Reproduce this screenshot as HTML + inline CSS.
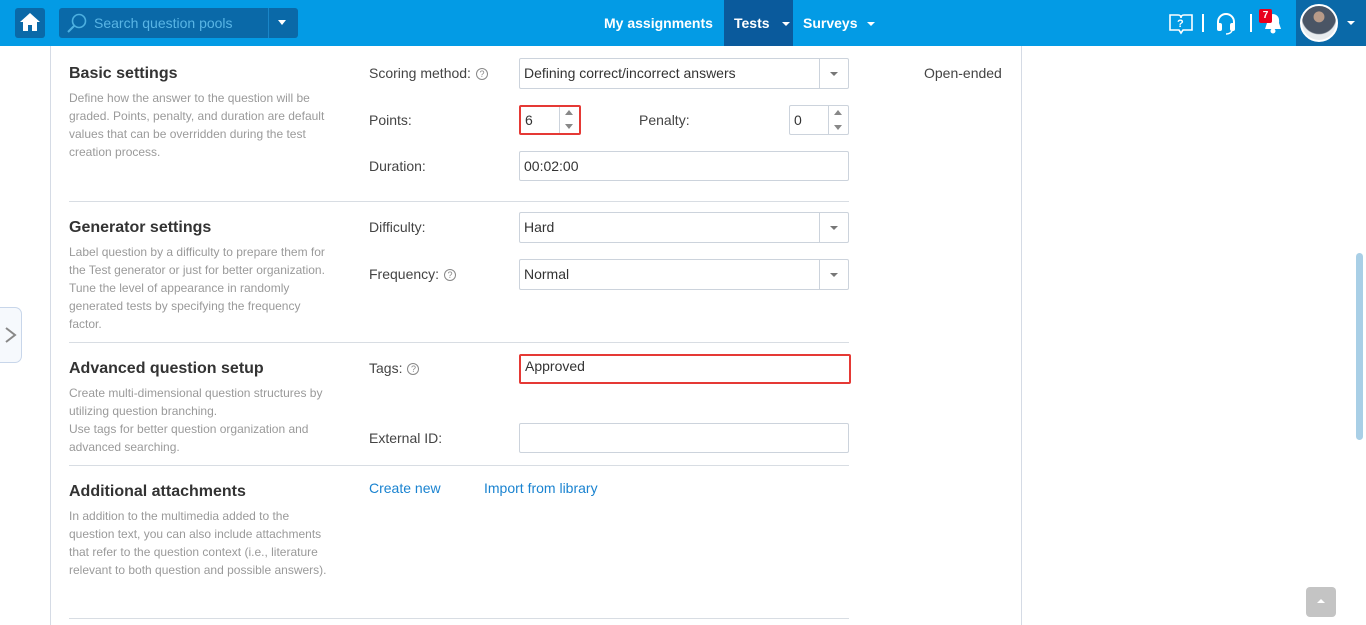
<!DOCTYPE html><html><head><meta charset="utf-8"><style>
*{box-sizing:border-box;margin:0;padding:0}
body{width:1366px;height:625px;overflow:hidden;background:#fff;font-family:"Liberation Sans",sans-serif;position:relative;color:#333}
.a{position:absolute}
.top{left:0;top:0;width:1366px;height:46px;background:#039be5}
.nav{color:#fff;font-size:14px;font-weight:bold;top:15px}
h2{position:absolute;font-size:16px;font-weight:bold;color:#333;left:69px}
.d{position:absolute;left:69px;font-size:12px;line-height:18px;color:#9a9a9a;white-space:nowrap}
.l{position:absolute;left:369px;font-size:14px;color:#444}
.in{position:absolute;border:1px solid #ccd3dc;border-radius:2px;font-size:14px;color:#333;padding:0 4px;background:#fff}
.sel::after{content:"";position:absolute;right:0;top:0;bottom:0;width:28px;border-left:1px solid #ccd3dc}
.car{position:absolute;right:10px;top:13px;border:4px solid transparent;border-top:4px solid #777;border-bottom:0;z-index:1}
.hr{position:absolute;left:69px;width:780px;height:1px;background:#d8dde3}
.q{display:inline-block;width:12px;height:12px;border:1px solid #888;border-radius:50%;font-size:9px;line-height:10px;text-align:center;color:#888;vertical-align:1px;margin-left:5px}
.sp{position:absolute;right:0;top:0;bottom:0;width:20px;border-left:1px solid #ccd3dc}
.sp i{position:absolute;left:5px;border:4px solid transparent}
</style></head><body>
<div class="a top"></div>
<div class="a" style="left:15px;top:8px;width:30px;height:30px;background:#0a69a8;border-radius:3px"></div>
<svg class="a" style="left:19px;top:12px" width="22" height="20"><path d="M11 1 L1 10 H4 V19 H9 V13 H13 V19 H18 V10 H21Z" fill="#fff"/></svg>
<div class="a" style="left:59px;top:8px;width:239px;height:30px;background:#0a69a8;border-radius:3px"></div>
<div class="a" style="left:268px;top:8px;width:1px;height:30px;background:#1a86c8"></div>
<svg class="a" style="left:66px;top:12px" width="22" height="22"><circle cx="13" cy="9" r="6.5" fill="none" stroke="#4db0e0" stroke-width="1.6"/><path d="M8 14 L2 20" stroke="#4db0e0" stroke-width="2"/></svg>
<div class="a" style="left:94px;top:15px;font-size:14px;color:#59b5e5">Search question pools</div>
<div class="a" style="left:278px;top:20px;border:4px solid transparent;border-top:5px solid #fff"></div>
<div class="a nav" style="left:604px">My assignments</div>
<div class="a" style="left:724px;top:0;width:69px;height:46px;background:#0a5a9c"></div>
<div class="a nav" style="left:734px">Tests</div>
<div class="a" style="left:782px;top:22px;border:4px solid transparent;border-top:4px solid #fff"></div>
<div class="a nav" style="left:803px">Surveys</div>
<div class="a" style="left:867px;top:22px;border:4px solid transparent;border-top:4px solid #fff"></div>
<svg class="a" style="left:1168px;top:11px" width="26" height="24"><path d="M2 4 H10 Q13 4 13 7 Q13 4 16 4 H24 V19 H15 L13 22 L11 19 H2Z" fill="none" stroke="#fff" stroke-width="1.6"/><text x="9" y="16" font-size="11" font-weight="bold" fill="#fff" font-family="Liberation Sans">?</text></svg>
<div class="a" style="left:1202px;top:14px;width:2px;height:18px;background:#fff"></div>
<svg class="a" style="left:1214px;top:11px" width="24" height="24"><path d="M4 14 V11 A8 8 0 0 1 20 11 V14" fill="none" stroke="#fff" stroke-width="2"/><rect x="3" y="12" width="5" height="8" rx="2" fill="#fff"/><rect x="16" y="12" width="5" height="8" rx="2" fill="#fff"/><path d="M18 20 Q16 23 12 23" fill="none" stroke="#fff" stroke-width="1.5"/></svg>
<div class="a" style="left:1250px;top:14px;width:2px;height:18px;background:#fff"></div>
<svg class="a" style="left:1263px;top:12px" width="20" height="22"><path d="M10 2 Q3 3 4 11 L2 17 H18 L16 11 Q17 3 10 2Z" fill="#fff"/><circle cx="10" cy="19" r="2.5" fill="#fff"/></svg>
<div class="a" style="left:1259px;top:9px;width:13px;height:14px;background:#e8001c;color:#fff;font-size:10px;font-weight:bold;text-align:center;line-height:14px;border-radius:2px">7</div>
<div class="a" style="left:1296px;top:0;width:70px;height:46px;background:#0a69a8"></div>
<div class="a" style="left:1300px;top:4px;width:38px;height:38px;border-radius:50%;background:radial-gradient(circle at 50% 32%,#b89a88 0 18%,#4a5565 20% 58%,#e8ecef 62%);border:2px solid #fff"></div>
<div class="a" style="left:1347px;top:21px;border:4px solid transparent;border-top:4px solid #fff"></div>
<div class="a" style="left:50px;top:46px;width:1px;height:579px;background:#d5dbe5"></div>
<div class="a" style="left:1021px;top:46px;width:1px;height:579px;background:#d5dbe5"></div>
<div class="a" style="left:0;top:307px;width:22px;height:56px;border:1px solid #c8d6ea;border-left:0;border-radius:0 7px 7px 0;background:#f6f9fd"></div>
<svg class="a" style="left:4px;top:326px" width="14" height="18"><path d="M2 2 L11 9 L2 16" fill="none" stroke="#888" stroke-width="2"/></svg>

<h2 style="top:65px">Basic settings</h2>
<div class="d" style="top:89px">Define how the answer to the question will be<br>graded. Points, penalty, and duration are default<br>values that can be overridden during the test<br>creation process.</div>
<div class="l" style="top:65px">Scoring method:<span class="q">?</span></div>
<div class="in sel" style="left:519px;top:58px;width:330px;height:31px;line-height:29px">Defining correct/incorrect answers<div class="car"></div></div>
<div class="l" style="top:112px">Points:</div>
<div class="in" style="left:519px;top:105px;width:62px;height:30px;line-height:27px;border:2px solid #e53935">6<div class="sp" style="border-color:#ccd3dc"><i style="top:3px;border-bottom:5px solid #888;border-top:0"></i><i style="bottom:4px;border-top:5px solid #888;border-bottom:0"></i></div></div>
<div class="l" style="left:639px;top:112px">Penalty:</div>
<div class="in" style="left:789px;top:105px;width:60px;height:30px;line-height:28px">0<div class="sp"><i style="top:4px;border-bottom:5px solid #888;border-top:0"></i><i style="bottom:4px;border-top:5px solid #888;border-bottom:0"></i></div></div>
<div class="l" style="top:158px">Duration:</div>
<div class="in" style="left:519px;top:151px;width:330px;height:30px;line-height:28px">00:02:00</div>
<div class="a" style="left:924px;top:65px;font-size:14px;color:#444">Open-ended</div>
<div class="hr" style="top:201px"></div>

<h2 style="top:219px">Generator settings</h2>
<div class="d" style="top:243px">Label question by a difficulty to prepare them for<br>the Test generator or just for better organization.<br>Tune the level of appearance in randomly<br>generated tests by specifying the frequency<br>factor.</div>
<div class="l" style="top:266px;top:219px">Difficulty:</div>
<div class="in sel" style="left:519px;top:212px;width:330px;height:31px;line-height:29px">Hard<div class="car"></div></div>
<div class="l" style="top:266px">Frequency:<span class="q">?</span></div>
<div class="in sel" style="left:519px;top:259px;width:330px;height:31px;line-height:29px">Normal<div class="car"></div></div>
<div class="hr" style="top:342px"></div>

<h2 style="top:360px">Advanced question setup</h2>
<div class="d" style="top:384px">Create multi-dimensional question structures by<br>utilizing question branching.<br>Use tags for better question organization and<br>advanced searching.</div>
<div class="l" style="top:360px">Tags:<span class="q">?</span></div>
<div class="in" style="left:519px;top:354px;width:332px;height:30px;line-height:20px;border:2px solid #e53935">Approved</div>
<div class="l" style="top:430px">External ID:</div>
<div class="in" style="left:519px;top:423px;width:330px;height:30px"></div>
<div class="hr" style="top:465px"></div>

<h2 style="top:483px">Additional attachments</h2>
<div class="d" style="top:507px">In addition to the multimedia added to the<br>question text, you can also include attachments<br>that refer to the question context (i.e., literature<br>relevant to both question and possible answers).</div>
<div class="a" style="left:369px;top:480px;font-size:14px;color:#1a83d0">Create new</div>
<div class="a" style="left:484px;top:480px;font-size:14px;color:#1a83d0">Import from library</div>
<div class="hr" style="top:618px"></div>

<div class="a" style="left:1356px;top:253px;width:7px;height:187px;border-radius:4px;background:#a9cfe6"></div>
<div class="a" style="left:1306px;top:587px;width:30px;height:30px;border-radius:4px;background:#c4c4c4"></div>
<div class="a" style="left:1317px;top:599px;border:4px solid transparent;border-bottom:4px solid #fff;border-top:0"></div>
</body></html>
